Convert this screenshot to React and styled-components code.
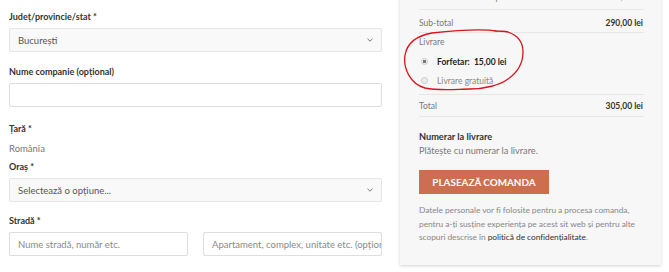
import styled, { createGlobalStyle } from "styled-components";

const Global = createGlobalStyle`
  html, body {
    margin: 0;
    padding: 0;
    background: #ffffff;
    font-family: Lato, "Open Sans", sans-serif;
    color: #333;
    overflow: hidden;
  }
`;

export default function App() {
  return (
    <Page>
      <Global />
      <Formular>
        <Eticheta>Județ/provincie/stat *</Eticheta>
        <Selector>
          <span>București</span>
          <Sageata />
        </Selector>

        <Eticheta $sus={13}>Nume companie (opțional)</Eticheta>
        <Camp />

        <Eticheta $sus={15}>Țară *</Eticheta>
        <Valoare>România</Valoare>

        <Eticheta $sus={4}>Oraș *</Eticheta>
        <Selector>
          <span>Selectează o opțiune...</span>
          <Sageata />
        </Selector>

        <Eticheta $sus={12}>Stradă *</Eticheta>
        <RandDublu>
          <Camp><Placeholder>Nume stradă, număr etc.</Placeholder></Camp>
          <Camp><Placeholder>Apartament, complex, unitate etc. (opțional)</Placeholder></Camp>
        </RandDublu>
      </Formular>

      <Panou>
        <RandTaiat>
          <span>Rochie de vară cu imprimeu floral × 1</span>
          <span>290,00 lei</span>
        </RandTaiat>
        <RandTabel $sus={7} $jos={3}>
          <Gri>Sub-total</Gri>
          <Suma>290,00 lei</Suma>
        </RandTabel>
        <Livrare>
          <Gri>Livrare</Gri>
          <Optiuni>
            <Optiune>
              <Radio $bifat />
              <b>Forfetar:&nbsp; 15,00 lei</b>
            </Optiune>
            <Optiune $stins>
              <Radio />
              <span>Livrare gratuită</span>
            </Optiune>
          </Optiuni>
        </Livrare>
        <RandTabel $sus={5} $jos={4}>
          <Gri>Total</Gri>
          <Suma>305,00 lei</Suma>
        </RandTabel>

        <Plata>
          <TitluPlata>Numerar la livrare</TitluPlata>
          <Gri>Plătește cu numerar la livrare.</Gri>
        </Plata>

        <Buton>PLASEAZĂ COMANDA</Buton>

        <Nota>
          Datele personale vor fi folosite pentru a procesa comanda,
          pentru a-ți susține experiența pe acest sit web și pentru alte
          scopuri descrise în <Link>politică de confidențialitate</Link>.
        </Nota>
      </Panou>

      <Adnotare viewBox="0 0 669 272">
        <path
          d="M 497 31 C 478 28, 450 31, 432 33 C 415 36, 407 44, 405 55 C 403 68, 410 84, 425 88 C 440 91, 458 89, 470 89 C 485 89, 500 85, 508 79 C 518 72, 523 62, 523 52 C 523 42, 517 35, 508 32 C 503 31, 498 31, 494 31"
          fill="none"
          stroke="#d8141c"
          strokeWidth="1.3"
          strokeLinecap="round"
        />
      </Adnotare>
    </Page>
  );
}

function Sageata() {
  return (
    <svg width="8" height="6" viewBox="0 0 8 6">
      <path d="M1.5 1.8 L4 4.2 L6.5 1.8" fill="none" stroke="#777" strokeWidth="1" />
    </svg>
  );
}

const Page = styled.div`
  position: relative;
  width: 669px;
  height: 272px;
  display: flex;
  align-items: flex-start;
  gap: 18px;
  padding-left: 9px;
  box-sizing: border-box;
`;

const Formular = styled.div`
  width: 373px;
  display: flex;
  flex-direction: column;
  padding-top: 10px;
`;

const Eticheta = styled.div`
  font-size: 9px;
  font-weight: 700;
  line-height: 14px;
  color: #333;
  margin-top: ${(p) => p.$sus || 0}px;
  margin-bottom: 4px;
`;

const Selector = styled.div`
  height: 24px;
  box-sizing: border-box;
  border: 1px solid #e6e6e6;
  background: #f9f9f9;
  border-radius: 2px;
  display: flex;
  align-items: center;
  justify-content: space-between;
  padding: 0 7px 0 8px;
  font-size: 9.5px;
  color: #555;
`;

const Camp = styled.div`
  height: 24px;
  box-sizing: border-box;
  border: 1px solid #dedede;
  background: #fff;
  border-radius: 2px;
  display: flex;
  align-items: center;
  padding: 0 8px;
  overflow: hidden;
  white-space: nowrap;
`;

const Placeholder = styled.span`
  font-size: 9.5px;
  color: #8a8a8a;
`;

const Valoare = styled.div`
  font-size: 9.5px;
  line-height: 14px;
  color: #777;
  margin-top: 2px;
`;

const RandDublu = styled.div`
  display: grid;
  grid-template-columns: 179px 179px;
  justify-content: space-between;
`;

const Panou = styled.div`
  width: 261px;
  box-sizing: border-box;
  margin-top: -20px;
  padding: 0 17px 20px 19px;
  background: #f7f7f8;
  box-shadow: 0 1px 3px rgba(0, 0, 0, 0.18);
  display: flex;
  flex-direction: column;
  font-size: 8.5px;
  color: #333;
`;

const RandTaiat = styled.div`
  display: flex;
  justify-content: space-between;
  line-height: 12px;
  padding: 11px 1px 6px 0;
  border-bottom: 1px solid #e8e8e8;
  color: #777;
`;

const RandTabel = styled.div`
  display: flex;
  justify-content: space-between;
  line-height: 12px;
  padding: ${(p) => p.$sus}px 1px ${(p) => p.$jos}px 0;
  border-bottom: 1px solid #e6e6e6;
`;

const Gri = styled.span`
  color: #777;
`;

const Suma = styled.span`
  font-weight: 700;
  color: #333;
`;

const Livrare = styled.div`
  padding-top: 3px;
  padding-bottom: 7px;
  border-bottom: 1px solid #e6e6e6;
  line-height: 12px;
`;

const Optiuni = styled.div`
  display: flex;
  flex-direction: column;
  gap: 6px;
  margin-top: 7px;
  padding-left: 2px;
`;

const Optiune = styled.div`
  display: flex;
  align-items: center;
  gap: 9px;
  height: 13px;
  color: ${(p) => (p.$stins ? "#888" : "#222")};

  b {
    font-weight: 700;
  }
`;

const Radio = styled.span`
  width: 7px;
  height: 7px;
  border-radius: 50%;
  box-sizing: border-box;
  border: 1px solid #cacaca;
  background: ${(p) =>
    p.$bifat
      ? "radial-gradient(circle, #777 0 1.5px, #f0f0f0 2px)"
      : "#ececec"};
`;

const Plata = styled.div`
  display: flex;
  flex-direction: column;
  margin-top: 13px;
  line-height: 14px;
  font-size: 9.2px;
`;

const TitluPlata = styled.span`
  font-weight: 700;
  color: #333;
`;

const Buton = styled.div`
  align-self: flex-start;
  margin-top: 12px;
  width: 130px;
  height: 24px;
  background: #cd6e4e;
  color: #fff;
  font-weight: 700;
  font-size: 9.9px;
  display: flex;
  align-items: center;
  justify-content: center;
`;

const Nota = styled.p`
  margin: 10px 0 0 0;
  font-size: 8.4px;
  line-height: 13.5px;
  letter-spacing: -0.05px;
  color: #888;
`;

const Link = styled.span`
  color: #333;
`;

const Adnotare = styled.svg`
  position: absolute;
  left: 0;
  top: 0;
  width: 669px;
  height: 272px;
  pointer-events: none;
`;
